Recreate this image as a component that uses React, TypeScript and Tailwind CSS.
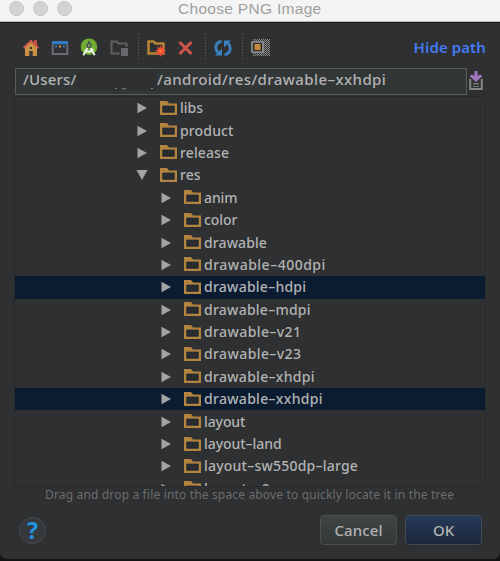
import React from "react";

type Item = { name: string; depth: 0 | 1; open?: boolean; selected?: boolean; spacing: string };

const items: Item[] = [
  { name: "libs", depth: 0, spacing: "tracking-[0px]" },
  { name: "product", depth: 0, spacing: "tracking-[0.15px]" },
  { name: "release", depth: 0, spacing: "tracking-[0.1px]" },
  { name: "res", depth: 0, open: true, spacing: "tracking-[0px]" },
  { name: "anim", depth: 1, spacing: "tracking-[-0.1px]" },
  { name: "color", depth: 1, spacing: "tracking-[-0.05px]" },
  { name: "drawable", depth: 1, spacing: "tracking-[0.1px]" },
  { name: "drawable–400dpi", depth: 1, spacing: "tracking-[0.5px]" },
  { name: "drawable–hdpi", depth: 1, selected: true, spacing: "tracking-[0.25px]" },
  { name: "drawable–mdpi", depth: 1, spacing: "tracking-[0.25px]" },
  { name: "drawable–v21", depth: 1, spacing: "tracking-[0.4px]" },
  { name: "drawable–v23", depth: 1, spacing: "tracking-[0.4px]" },
  { name: "drawable–xhdpi", depth: 1, spacing: "tracking-[0.3px]" },
  { name: "drawable–xxhdpi", depth: 1, selected: true, spacing: "tracking-[0.3px]" },
  { name: "layout", depth: 1, spacing: "tracking-[-0.1px]" },
  { name: "layout–land", depth: 1, spacing: "tracking-[-0.05px]" },
  { name: "layout–sw550dp–large", depth: 1, spacing: "tracking-[0.22px]" },
  { name: "layout–v9", depth: 1, spacing: "tracking-[0.2px]" },
];

function Folder() {
  return (
    <svg className="h-[15px] w-[17px] shrink-0" viewBox="0 0 17 15">
      <path d="M0 0h7l2 2.6h8V14H0z" fill="#b38340" />
      <path d="M2.7 5h11.6v6.3H2.7z" fill="#292d32" stroke="#192231" strokeWidth=".7" />
    </svg>
  );
}

function Row({ item }: { item: Item }) {
  return (
    <div
      className={`flex h-[22.4px] shrink-0 items-center ${item.selected ? "bg-[#0b1c31]" : ""} ${
        item.depth ? "pl-[145px]" : "pl-[121px]"
      }`}
    >
      <svg className="h-3 w-3 shrink-0" viewBox="0 0 12 12">
        <path d={item.open ? "M.5 1h11L6 11z" : "M1.5.7 11 6l-9.500 5.300z"} fill="#a3a3a3" />
      </svg>
      <div className="ml-3 flex items-center">
        <Folder />
        <span className={`ml-[3px] whitespace-pre text-[14px] font-medium leading-[22px] ${item.spacing}`}>{item.name}</span>
      </div>
    </div>
  );
}

function Separator() {
  return <div className="h-[27px] w-px bg-[repeating-linear-gradient(to_bottom,#65676a_0px,#65676a_1px,transparent_1px,transparent_3px)]" />;
}

function Toolbar() {
  return (
    <div className="flex h-[29px] items-center pl-[23px] pr-[14px]">
      <svg className="h-[18px] w-4" viewBox="0 0 16 18">
        <path d="M2 8 8 3l6 5v9H2z" fill="#c79143" />
        <path d="M11 1h3v5h-3z" fill="#bb4d43" />
        <path d="m.7 9 7.300-7 7.300 7" fill="none" stroke="#ce5c50" strokeWidth="2" />
        <path d="M6.300 12h3.400v5H6.300zM7 8h2v2H7z" fill="#34343a" />
      </svg>
      <svg className="ml-3 h-4 w-[18px]" viewBox="0 0 18 16">
        <path d="M1.700 4v10h14.600V4" fill="none" stroke="#6a6c6f" strokeWidth="2" />
        <path d="M1 1h16v3.400H1z" fill="#347cc0" />
        <path d="M4 5.500h2v2H4zM12 5.500h2v2h-2z" fill="#397dbc" />
        <path d="M8 5.500h2v2H8z" fill="#d99b34" />
      </svg>
      <svg className="ml-[11px] h-[19px] w-[18px]" viewBox="0 0 18 19">
        <circle cx="9" cy="8.700" r="8.300" fill="#72ad30" />
        <path d="M8 3h2v1.500l2 2.500-1 3.500H7L6 7l2-2.500z" fill="#4b5a4c" />
        <circle cx="9" cy="7.500" r="1" fill="#9cc27a" />
        <path d="m3.300 17.200 4.200-7.200M14.700 17.200 10.500 10M4.800 11.800c2.800 3 5.600 2.600 8.400-.8" fill="none" stroke="#eff3ee" strokeWidth="1.900" />
      </svg>
      <svg className="ml-3 h-[18px] w-[19px]" viewBox="0 0 19 18">
        <path d="M9.500 14.500h-8V2.500h5l2 2h8V8" fill="none" stroke="#5c5e60" strokeWidth="2.200" />
        <path d="M11 9h7v8h-7z" fill="#65676a" />
      </svg>
      <div className="ml-[9px]"><Separator /></div>
      <svg className="ml-2 h-[18px] w-[19px]" viewBox="0 0 19 18">
        <path d="M1.500 14.500V2.500h5l2 2h8v10z" fill="none" stroke="#b98335" strokeWidth="2.500" />
        <path d="m13.500 6 1.200 3 2.700-1.700-.9 3.100 2.500 1.100-2.500 1.400 1.500 2.900-3.200-.7-1.300 2.900-1.300-3-3.100.8 1.400-2.900-2.500-1.400 3-.9-.8-3 2.500 1.500z" fill="#f04a35" />
        <circle cx="13.500" cy="12" r="2" fill="#fb7434" />
      </svg>
      <svg className="ml-[12px] h-4 w-[15px]" viewBox="0 0 15 16">
        <path d="m1.500 2 12 12M13.500 2l-12 12" stroke="#d15449" strokeWidth="3" />
      </svg>
      <div className="ml-[12px]"><Separator /></div>
      <svg className="ml-2 h-[18px] w-[18px]" viewBox="0 0 18 18">
        <path d="M7.500 2.500C1.500 3 0 9.500 4.500 14.500M10.500 15.500C16.500 15 18 8.500 13.500 3.500" fill="none" stroke="#3b80bd" strokeWidth="2.900" />
        <path d="M1 16.500h7V9.500zM17 1.500h-7V8.500z" fill="#3b80bd" />
      </svg>
      <div className="ml-[10px]"><Separator /></div>
      <svg className="ml-2 h-[17px] w-[19px]" viewBox="0 0 19 17">
        <defs>
          <pattern id="grain" width="2" height="2" patternUnits="userSpaceOnUse">
            <path d="M0 0h1v1H0zM1 1h1v1H1z" fill="#898b8d" />
          </pattern>
        </defs>
        <path d="M2 0h17v17H2z" fill="url(#grain)" />
        <path d="M1 3h11v10H1z" fill="#2b2d2f" stroke="#8f9192" strokeWidth="1.700" />
        <path d="M3.500 5h6v6h-6z" fill="#c48a37" />
      </svg>
      <span className="ml-auto text-[15px] font-semibold leading-none tracking-[0.1px] text-[#427bf0]">Hide path</span>
    </div>
  );
}

export default function App() {
  return (
    <div className="h-[561px] w-[500px] overflow-hidden bg-[#151313] font-['Noto_Sans','Open_Sans',sans-serif] text-[#b2b3b4]">
      <main className="flex h-[559px] flex-col overflow-hidden rounded-b-[7px] bg-[#2e3031]">
        <header className="flex h-[22px] shrink-0 items-center border-b border-[#b9b9b9] bg-[#f4f4f4] pb-[4px] pl-[9px]">
          <div className="flex gap-[9px]">
            <i className="size-[15px] rounded-full border border-[#c5c5c5] bg-[#d2d2d2]" />
            <i className="size-[15px] rounded-full border border-[#c5c5c5] bg-[#d2d2d2]" />
            <i className="size-[15px] rounded-full border border-[#c5c5c5] bg-[#d2d2d2]" />
          </div>
          <h1 className="ml-[106px] whitespace-nowrap font-['Liberation_Sans',sans-serif] text-[15.500px] leading-4 tracking-[0.3px] text-[#a09e9e]">Choose PNG Image</h1>
        </header>
        <div className="h-[11px] shrink-0 border-t border-[#1d1e1f]" />
        <Toolbar />
        <div className="flex h-[34px] shrink-0 items-center pl-[15px]">
          <div className="mt-1 flex h-[27px] w-[452px] items-center border border-[#585b5c] bg-[#323637] pb-[3px] pl-[7px] text-[15px] font-medium leading-none tracking-[0.42px]">
            <span className="w-[54px] whitespace-nowrap tracking-[0.2px]">/Users/</span>
            <svg className="h-[20px] w-[80px] shrink-0" viewBox="0 0 80 20">
              <path d="M0 0h80v20H0z" fill="#2e3031" />
              <path d="M38 18.500h1.500M45 18c1 1.300 3 1.300 4 0M74 18.500h2" fill="none" stroke="#8b8c8d" />
            </svg>
            <span className="whitespace-nowrap">/android/res/drawable–xxhdpi</span>
          </div>
          <svg className="ml-[2px] mt-1 h-5 w-[14px]" viewBox="0 0 14 20">
            <path d="M1.200 8v10h11.600V8" fill="none" stroke="#858789" strokeWidth="2" />
            <path d="M4 12h6v1.500H4zM4 15h6v1H4z" fill="#747678" />
            <path d="M5.500 0h3v5L11 3.500l2.500 1.500L7 11 .5 5 3 3.500 5.500 5z" fill="#a175bd" />
          </svg>
        </div>
        <section className="ml-[14px] h-[391px] w-[472px] shrink-0 overflow-hidden border border-[#272a2b]">
          {items.map((item) => <Row key={item.name} item={item} />)}
        </section>
        <p className="h-[17px] shrink-0 whitespace-nowrap pl-[45px] text-[12px] leading-[15px] tracking-[0.16px] text-[#6c6d6e]">Drag and drop a file into the space above to quickly locate it in the tree</p>
        <footer className="flex items-center pl-[19px] pr-[18px] pt-[11px]">
          <button className="flex size-[27px] items-center justify-center rounded-full border border-[#484b4d] bg-[#35393c] text-[#2393e6]">
            <span className="font-['Open_Sans',sans-serif] text-[23px] font-bold leading-none">?</span>
          </button>
          <button className="ml-auto h-[30px] w-[77px] rounded-[4px] border border-[#4b4f50] bg-linear-to-b from-[#404445] to-[#343839] text-[15px] font-medium leading-none tracking-[0.1px]">Cancel</button>
          <button className="ml-2 h-[30px] w-[77px] rounded-[4px] border border-[#414956] bg-linear-to-b from-[#27395a] to-[#1b2839] text-[15px] font-medium leading-none">OK</button>
        </footer>
      </main>
    </div>
  );
}
